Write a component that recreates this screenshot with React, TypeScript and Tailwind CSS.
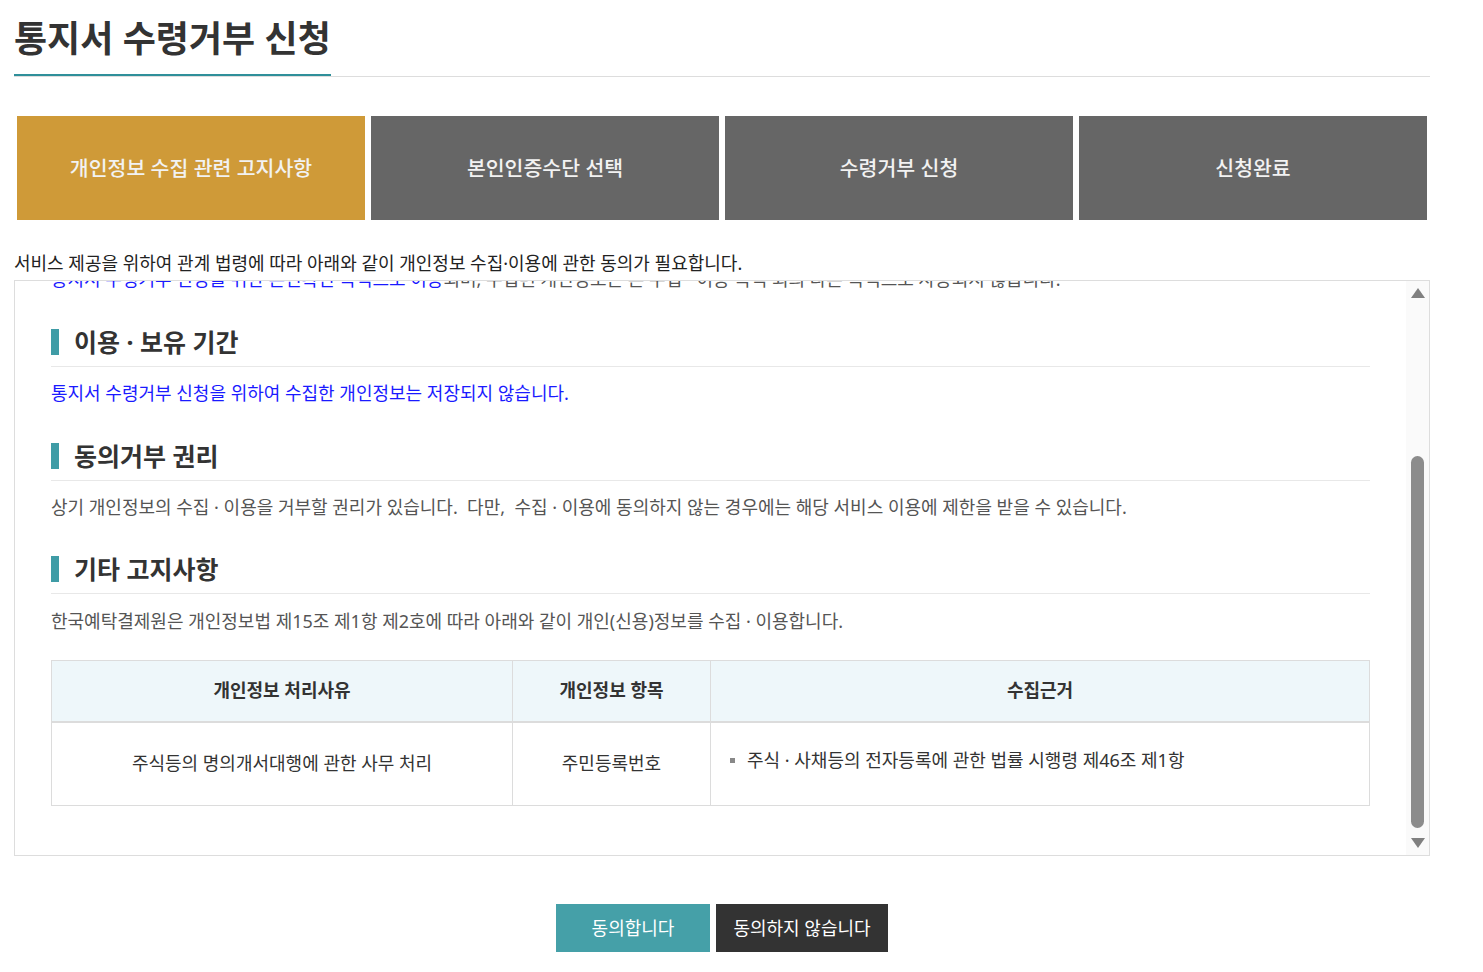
import React from "react";

type Step = { label: string; active?: boolean };

const steps: Step[] = [
  { label: "개인정보 수집 관련 고지사항", active: true },
  { label: "본인인증수단 선택" },
  { label: "수령거부 신청" },
  { label: "신청완료" },
];

/** 섹션 제목 (왼쪽 막대 + 밑줄) */
function SectionTitle({ title, className = "" }: { title: string; className?: string }) {
  return (
    <h3
      className={`flex items-center border-b border-[#e8e8e8] pb-[6px] text-[25px] font-bold leading-[36px] text-[#333] ${className}`}
    >
      <span className="mr-[15px] inline-block h-[26px] w-[8px] bg-[#3f9ca6]" />
      {title}
    </h3>
  );
}

/** 스크롤바 모양 */
function FakeScrollbar() {
  return (
    <div className="flex w-[23px] shrink-0 flex-col items-center bg-[#fafafa] pt-[7px]">
      <div className="h-0 w-0 border-x-[7px] border-b-[10px] border-x-transparent border-b-[#808080]" />
      <div className="mt-[158px] h-[372px] w-[13px] rounded-full bg-[#8c8c8c]" />
      <div className="mt-[10px] h-0 w-0 border-x-[7px] border-t-[10px] border-x-transparent border-t-[#808080]" />
    </div>
  );
}

function NoticeTable() {
  return (
    <table className="mt-[25px] w-full border-collapse text-[18px] text-[#333]">
      <thead>
        <tr className="h-[61px] bg-[#eef7fa]">
          <th className="w-[461px] border border-b-2 border-[#dcdcdc] font-bold">개인정보 처리사유</th>
          <th className="w-[198px] border border-b-2 border-[#dcdcdc] font-bold">개인정보 항목</th>
          <th className="border border-b-2 border-[#dcdcdc] font-bold">수집근거</th>
        </tr>
      </thead>
      <tbody>
        <tr className="h-[84px]">
          <td className="border border-[#dcdcdc] text-center">주식등의 명의개서대행에 관한 사무 처리</td>
          <td className="border border-[#dcdcdc] text-center">주민등록번호</td>
          <td className="border border-[#dcdcdc] pb-[6px] pl-[19px]">
            <span className="flex items-center">
              <span className="mr-[12px] inline-block h-[5px] w-[5px] bg-[#888]" />
              주식 · 사채등의 전자등록에 관한 법률 시행령 제46조 제1항
            </span>
          </td>
        </tr>
      </tbody>
    </table>
  );
}

export default function App() {
  return (
    <div
      className="min-h-screen bg-white pl-[14px] text-[#222]"
      style={{ fontFamily: '"Noto Sans", "Noto Sans CJK KR", sans-serif' }}
    >
      <div className="w-[1416px]">
        {/* 제목 */}
        <div className="flex border-b border-[#dddddd]">
          <h1 className="border-b-2 border-[#2f8f9a] pb-[8px] pt-[12px] text-[36px] font-bold leading-[54px] text-[#333]">
            통지서 수령거부 신청
          </h1>
        </div>

        {/* 단계 */}
        <div className="mt-[39px] grid grid-cols-4 gap-[6px] px-[3px]">
          {steps.map((s) => (
            <div
              key={s.label}
              className={`flex h-[104px] items-center justify-center text-[20.5px] font-medium text-[#f2f2f2] ${
                s.active ? "bg-[#cf9a38]" : "bg-[#666666]"
              }`}
            >
              {s.label}
            </div>
          ))}
        </div>

        <p className="mt-[29px] text-[18px] leading-[28px] text-[#222]">
          서비스 제공을 위하여 관계 법령에 따라 아래와 같이 개인정보 수집·이용에 관한 동의가 필요합니다.
        </p>

        {/* 고지 내용 */}
        <div className="mt-[3px] flex h-[576px] overflow-hidden border border-[#dddddd]">
          <div className="flex-1 overflow-hidden px-[36px] pb-[48px]">
            <p className="mt-[-16px] text-[18px] leading-[28px] text-[#555]">
              <span className="text-[#1a1aff]">통지서 수령거부 신청을 위한 본인확인 목적으로 이용</span>
              되며, 수집된 개인정보는 본 수집 · 이용 목적 외의 다른 목적으로 사용되지 않습니다.
            </p>

            <SectionTitle title="이용 · 보유 기간" className="mt-[31px]" />
            <p className="mt-[12px] text-[18px] leading-[28px] text-[#1a1aff]">
              통지서 수령거부 신청을 위하여 수집한 개인정보는 저장되지 않습니다.
            </p>

            <SectionTitle title="동의거부 권리" className="mt-[31px]" />
            <p className="mt-[12px] text-[18px] leading-[28px] text-[#555]">
              상기 개인정보의 수집 · 이용을 거부할 권리가 있습니다.{"\u00a0 "}다만,{"\u00a0 "}수집 · 이용에 동의하지 않는 경우에는
              해당 서비스 이용에 제한을 받을 수 있습니다.
            </p>

            <SectionTitle title="기타 고지사항" className="mt-[30px]" />
            <p className="mt-[13px] text-[18px] leading-[28px] text-[#555]">
              한국예탁결제원은 개인정보법 제15조 제1항 제2호에 따라 아래와 같이 개인(신용)정보를 수집 · 이용합니다.
            </p>

            <NoticeTable />
          </div>
          <FakeScrollbar />
        </div>

        {/* 버튼 */}
        <div className="mt-[48px] flex justify-center gap-[6px] pb-[20px]">
          <button className="h-[48px] w-[154px] bg-[#45a0a8] text-[18px] text-white">동의합니다</button>
          <button className="h-[48px] w-[172px] bg-[#333333] text-[18px] text-white">동의하지 않습니다</button>
        </div>
      </div>
    </div>
  );
}
